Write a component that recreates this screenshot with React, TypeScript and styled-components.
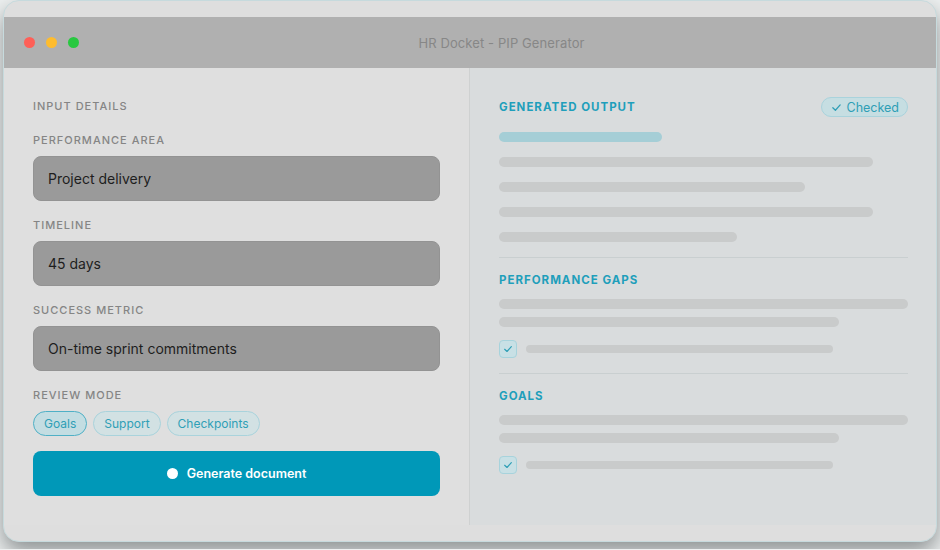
import React from "react";
import styled, { createGlobalStyle } from "styled-components";

const Global = createGlobalStyle`
  html, body { margin: 0; padding: 0; background: #eef1f1; }
  body { font-family: Inter, "Noto Sans", sans-serif; }
  * { box-sizing: border-box; }
`;

const Page = styled.div`
  padding: 0 3px 7px;
  width: 940px;
`;

const Window = styled.div`
  border: 1px solid #c6dadd;
  border-radius: 16px;
  background: #dedede;
  padding: 16px 0 16px;
  box-shadow: 0 10px 22px rgba(60, 66, 68, 0.55);
  overflow: hidden;
`;

const TitleBar = styled.div`
  height: 51px;
  background: #b0b0b0;
  display: flex;
  align-items: center;
  padding: 0 12px 0 20px;
`;

const Dots = styled.div`
  display: flex;
  gap: 11px;
`;

const Dot = styled.span<{ $c: string }>`
  width: 11px;
  height: 11px;
  border-radius: 50%;
  background: ${(p) => p.$c};
`;

const Title = styled.div`
  flex: 1;
  text-align: center;
  font-size: 13px;
  color: #878787;
  letter-spacing: 0.1px;
`;

const Body = styled.div`
  display: grid;
  grid-template-columns: 466px 1fr;
  height: 457px;
`;

const Left = styled.div`
  background: #dfdfdf;
  border-right: 1px solid #cfd1d1;
  padding: 31px 29px 0 29px;
  display: flex;
  flex-direction: column;
`;

const Heading = styled.div`
  font-size: 11px;
  line-height: 14px;
  font-weight: 500;
  letter-spacing: 1px;
  text-transform: uppercase;
  color: #858585;
  margin-bottom: 20px;
`;

const Field = styled.div`
  display: flex;
  flex-direction: column;
  gap: 9px;
  margin-bottom: 17px;
`;

const Label = styled.div`
  font-size: 11px;
  line-height: 14px;
  font-weight: 500;
  letter-spacing: 1px;
  text-transform: uppercase;
  color: #858585;
`;

const Input = styled.div`
  height: 45px;
  border-radius: 8px;
  background: #9a9a9a;
  border: 1px solid #939393;
  display: flex;
  align-items: center;
  padding: 0 14px;
  font-size: 14px;
  color: #1e1e1e;
`;

const Chips = styled.div`
  display: flex;
  gap: 6px;
`;

const Chip = styled.div<{ $active?: boolean }>`
  height: 25px;
  padding: 0 10px;
  border-radius: 13px;
  display: flex;
  align-items: center;
  font-size: 12px;
  color: #2f9fb6;
  background: ${(p) => (p.$active ? "#c3dde2" : "#d2e1e3")};
  border: 1px solid ${(p) => (p.$active ? "#4fb0c6" : "#a9d3dc")};
`;

const Button = styled.div`
  margin-top: -2px;
  height: 45px;
  border-radius: 8px;
  background: #0098b8;
  display: flex;
  align-items: center;
  justify-content: center;
  gap: 9px;
  color: #ffffff;
  font-size: 12.5px;
  font-weight: 600;
`;

const WhiteDot = styled.span`
  width: 11px;
  height: 11px;
  border-radius: 50%;
  background: #ffffff;
`;

const Right = styled.div`
  background: #d9dcdd;
  padding: 28px 28px 0 29px;
  display: flex;
  flex-direction: column;
`;

const HeaderRow = styled.div`
  display: flex;
  justify-content: space-between;
  align-items: center;
  height: 22px;
  margin-bottom: 14px;
`;

const SectionTitle = styled.div`
  font-size: 11.5px;
  line-height: 14px;
  font-weight: 700;
  letter-spacing: 1px;
  text-transform: uppercase;
  color: #1f9fbb;
`;

const Badge = styled.div`
  height: 20px;
  padding: 0 8px 0 9px;
  border-radius: 10px;
  background: #c6dee2;
  border: 1px solid #a9d3dc;
  display: flex;
  align-items: center;
  gap: 5px;
  font-size: 12.5px;
  color: #2f9fb6;
`;

const Bars = styled.div<{ $gap: number }>`
  display: flex;
  flex-direction: column;
  gap: ${(p) => p.$gap}px;
`;

const Bar = styled.div<{ $w: string; $accent?: boolean; $h?: number }>`
  width: ${(p) => p.$w};
  height: ${(p) => p.$h ?? 10}px;
  border-radius: 5px;
  background: ${(p) => (p.$accent ? "#a5ced6" : "#c9cbcb")};
`;

const Divider = styled.div`
  height: 1px;
  background: #c9cfd0;
  margin: 15px 0 15px;
`;

const Section = styled.div`
  display: flex;
  flex-direction: column;
`;

const SectionHead = styled(SectionTitle)`
  margin-bottom: 12px;
`;

const CheckRow = styled.div`
  display: flex;
  align-items: center;
  gap: 9px;
  margin-top: 13px;
`;

const Box = styled.div`
  width: 18px;
  height: 18px;
  border-radius: 4px;
  background: #c8e0e5;
  border: 1px solid #a7d3dc;
  display: flex;
  align-items: center;
  justify-content: center;
`;

const Check = ({ size = 10 }: { size?: number }) => (
  <svg width={size} height={size} viewBox="0 0 12 12" fill="none">
    <path d="M2 6.3 L4.8 9 L10 3.2" stroke="#2f9fb6" strokeWidth="1.4" strokeLinecap="round" strokeLinejoin="round" />
  </svg>
);

export default function App() {
  return (
    <Page>
      <Global />
      <Window>
        <TitleBar>
          <Dots>
            <Dot $c="#fe5f57" />
            <Dot $c="#febc2e" />
            <Dot $c="#28c840" />
          </Dots>
          <Title>HR Docket - PIP Generator</Title>
        </TitleBar>
        <Body>
          <Left>
            <Heading>Input details</Heading>
            <Field>
              <Label>Performance area</Label>
              <Input>Project delivery</Input>
            </Field>
            <Field>
              <Label>Timeline</Label>
              <Input>45 days</Input>
            </Field>
            <Field>
              <Label>Success metric</Label>
              <Input>On-time sprint commitments</Input>
            </Field>
            <Field>
              <Label>Review mode</Label>
              <Chips>
                <Chip $active>Goals</Chip>
                <Chip>Support</Chip>
                <Chip>Checkpoints</Chip>
              </Chips>
            </Field>
            <Button>
              <WhiteDot />
              Generate document
            </Button>
          </Left>
          <Right>
            <HeaderRow>
              <SectionTitle>Generated output</SectionTitle>
              <Badge>
                <Check size={11} />
                Checked
              </Badge>
            </HeaderRow>
            <Bars $gap={15}>
              <Bar $w="163px" $accent />
              <Bar $w="374px" />
              <Bar $w="306px" />
              <Bar $w="374px" />
              <Bar $w="238px" />
            </Bars>
            <Divider />
            <Section>
              <SectionHead>Performance gaps</SectionHead>
              <Bars $gap={8}>
                <Bar $w="100%" />
                <Bar $w="340px" />
              </Bars>
              <CheckRow>
                <Box>
                  <Check />
                </Box>
                <Bar $w="307px" $h={8} />
              </CheckRow>
            </Section>
            <Divider />
            <Section>
              <SectionHead>Goals</SectionHead>
              <Bars $gap={8}>
                <Bar $w="100%" />
                <Bar $w="340px" />
              </Bars>
              <CheckRow>
                <Box>
                  <Check />
                </Box>
                <Bar $w="307px" $h={8} />
              </CheckRow>
            </Section>
          </Right>
        </Body>
      </Window>
    </Page>
  );
}
